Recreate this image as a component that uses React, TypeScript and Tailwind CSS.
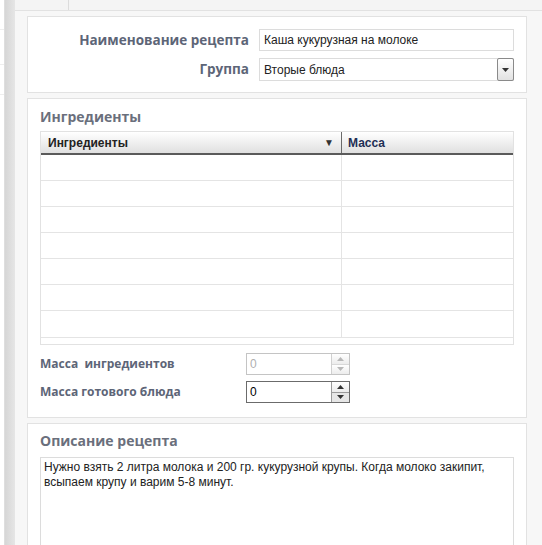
import React from 'react';

const Spinner = ({ disabled }: { disabled?: boolean }) => (
  <div
    className={`flex h-[22px] w-[104px] border ${disabled ? 'border-[#c4c4c4]' : 'border-[#6b6b6b]'} bg-white`}
  >
    <div
      className={`flex-1 px-[3px] leading-[20px] text-[12px] font-['Liberation_Sans',Arial,sans-serif] ${
        disabled ? 'text-[#b0b0b0]' : 'text-black'
      }`}
    >
      0
    </div>
    <div className={`flex w-[18px] flex-col border-l ${disabled ? 'border-[#d0d0d0]' : 'border-[#9a9a9a]'}`}>
      <div className={`flex flex-1 items-center justify-center border-b ${disabled ? 'border-[#d8d8d8]' : 'border-[#9a9a9a]'} bg-gradient-to-b from-white to-[#ececec]`}>
        <svg width="7" height="4" viewBox="0 0 7 4">
          <path d="M0 4 L3.5 0 L7 4 Z" fill={disabled ? '#b8b8b8' : '#333'} />
        </svg>
      </div>
      <div className={`flex flex-1 items-center justify-center ${disabled ? 'bg-gradient-to-b from-white to-[#ececec]' : 'bg-[#e6e6e6]'}`}>
        <svg width="7" height="4" viewBox="0 0 7 4">
          <path d="M0 0 L7 0 L3.5 4 Z" fill={disabled ? '#b8b8b8' : '#333'} />
        </svg>
      </div>
    </div>
  </div>
);

export default function App() {
  const rows = [0, 1, 2, 3, 4, 5, 6];
  const sans = "font-['Open_Sans',sans-serif]";
  const arial = "font-['Liberation_Sans',Arial,sans-serif]";

  return (
    <div className="flex h-[545px] w-[542px] overflow-hidden bg-[#f7f7f7]">
      {/* left strip */}
      <div className="flex w-[5px] shrink-0 flex-col border-r border-[#dedede] bg-white">
        <div className="h-[30px] shrink-0 border-b border-[#eeeeee]" />
        <div className="h-[35px] shrink-0 border-b border-[#eeeeee]" />
        <div className="h-[30px] shrink-0 border-b border-[#eeeeee]" />
      </div>
      <div className="w-[10px] shrink-0 bg-gradient-to-r from-[#d6d6d6] to-[#e6e6e6]" />

      <div className="flex flex-1 flex-col">
        {/* top bar */}
        <div className="flex h-[11px] shrink-0 border-b border-[#e2e2e2] bg-[#f4f4f4]">
          <div className="w-[54px] border-r border-[#dcdcdc]" />
        </div>

        <div className="flex shrink-0 flex-col gap-[5px] pl-[12px] pr-[15px] pt-[5px]">
          {/* Panel 1 */}
          <div className="h-[77px] shrink-0 border border-[#e2e2e2] bg-white pr-[12px] pt-[12px]">
            <div className="flex items-center">
              <div className={`w-[231px] pr-[10px] text-right text-[13.5px] font-bold text-[#5d6577] ${sans}`}>
                Наименование рецепта
              </div>
              <div className={`flex h-[22px] flex-1 items-center border border-[#dcdcdc] px-[4px] text-[12px] text-[#222] ${arial}`}>
                Каша кукурузная на молоке
              </div>
            </div>
            <div className="mt-[7px] flex items-center">
              <div className={`w-[231px] pr-[10px] text-right text-[13.5px] font-bold text-[#5d6577] ${sans}`}>Группа</div>
              <div className={`flex h-[23px] flex-1 items-center border border-[#dcdcdc] pl-[4px] text-[12px] text-[#222] ${arial}`}>
                <span className="flex-1">Вторые блюда</span>
                <div className="-mr-px flex h-[23px] w-[17px] items-center justify-center rounded-[2px] border border-[#8a8a8a] bg-gradient-to-b from-white to-[#e2e2e2]">
                  <svg width="7" height="4" viewBox="0 0 7 4">
                    <path d="M0 0 L7 0 L3.5 4 Z" fill="#333" />
                  </svg>
                </div>
              </div>
            </div>
          </div>

          {/* Panel 2 */}
          <div className="h-[320px] shrink-0 border border-[#e2e2e2] bg-white px-[12px]">
            <div className={`pt-[8px] text-[14px] font-bold leading-[19px] text-[#6a6f7c] ${sans}`}>Ингредиенты</div>
            <div className="mt-[5px] h-[214px] border border-[#e2e2e2]">
              <div className={`flex h-[23px] border-b-2 border-[#5a5a5a] bg-gradient-to-b from-white to-[#e0e0e0] text-[12px] font-bold text-[#222] ${arial}`}>
                <div className="flex w-[301px] items-center border-r border-[#6a6a6a] pl-[7px] pr-[7px]">
                  <span className="flex-1">Ингредиенты</span>
                  <span className="text-[10px] text-[#333]">▼</span>
                </div>
                <div className="flex flex-1 items-center pl-[6px] text-[#1e2f55]">Масса</div>
              </div>
              {rows.map((r) => (
                <div key={r} className={`flex h-[26px] ${r < 6 ? 'border-b border-[#e4e4e4]' : ''}`}>
                  <div className="w-[301px] border-r border-[#e4e4e4]" />
                  <div className="flex-1" />
                </div>
              ))}
              <div className="h-[6px] border-t border-[#e4e4e4]" />
            </div>

            <div className="mt-[8px] flex items-center">
              <div className={`w-[206px] text-[12px] font-bold text-[#5d6577] ${sans}`}>
                Масса&nbsp;&nbsp;ингредиентов
              </div>
              <Spinner disabled />
            </div>
            <div className="mt-[6px] flex items-center">
              <div className={`w-[206px] text-[12px] font-bold text-[#5d6577] ${sans}`}>Масса готового блюда</div>
              <Spinner />
            </div>
          </div>

          {/* Panel 3 */}
          <div className="h-[140px] shrink-0 border border-[#e2e2e2] bg-white px-[12px]">
            <div className={`pt-[7px] text-[14px] font-bold leading-[19px] text-[#6a6f7c] ${sans}`}>Описание рецепта</div>
            <div className={`mt-[7px] h-[120px] border border-[#dcdcdc] px-[3px] pt-[2px] text-[12px] leading-[15px] text-[#222] ${arial}`}>
              Нужно взять 2 литра молока и 200 гр. кукурузной крупы. Когда молоко закипит, всыпаем крупу и варим 5-8 минут.
            </div>
          </div>
        </div>
      </div>
    </div>
  );
}
